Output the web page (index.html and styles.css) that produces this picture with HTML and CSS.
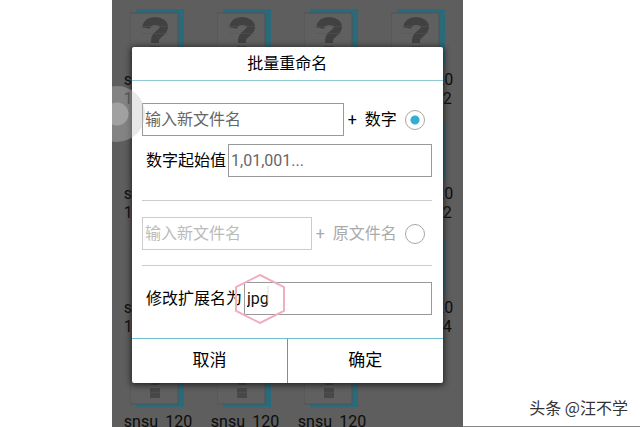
FILE: index.html
```html
<!DOCTYPE html>
<html lang="zh-CN">
<head>
<meta charset="utf-8">
<title>批量重命名</title>
<link rel="stylesheet" href="styles.css">
</head>
<body>
<svg class="defs" aria-hidden="true">
  <symbol id="file" viewBox="0 0 54 56">
    <path class="fold" d="M6 0h48v56H6z"/>
    <path class="paper" d="M0 4h48v49H0z"/>
    <path class="mark" d="M16 19c1-5 4-7 9-7 6 0 9 3 9 6 0 6-9 7-9 13v3"/>
    <path class="dot" d="M20 37h10v10H20z"/>
    <path class="crease" d="M20 41.500h10M11 17.500h27M11 24.500h27"/>
  </symbol>
</svg>
<main class="phone">
  <div class="files">
    <div class="file"><svg><use href="#file"/></svg><span>snsu_120</span><span>19</span></div>
    <div class="file"><svg><use href="#file"/></svg></div>
    <div class="file"><svg><use href="#file"/></svg></div>
    <div class="file"><svg><use href="#file"/></svg><span>snsu_120</span><span class="end">2</span></div>
    <div class="file"><svg><use href="#file"/></svg><span>snsu_120</span><span>19</span></div>
    <div class="file last"><svg><use href="#file"/></svg><span>snsu_120</span><span class="end">2</span></div>
    <div class="file"><svg><use href="#file"/></svg><span>snsu_120</span><span>19</span></div>
    <div class="file last"><svg><use href="#file"/></svg><span>snsu_120</span><span class="end">4</span></div>
    <div class="file"><svg><use href="#file"/></svg><span>snsu_120</span></div>
    <div class="file"><svg><use href="#file"/></svg><span>snsu_120</span></div>
    <div class="file"><svg><use href="#file"/></svg><span>snsu_120</span></div>
  </div>
  <form class="dialog" role="dialog" aria-labelledby="title">
    <h1 id="title">批量重命名</h1>
    <div class="fields">
      <div class="row">
        <input class="box" type="text" placeholder="输入新文件名" aria-label="输入新文件名">
        <label class="option" for="number"><span class="plus">+</span>数字</label>
        <input class="radio" type="radio" name="mode" id="number" checked>
      </div>
      <div class="row indent">
        <label for="start">数字起始值</label>
        <input class="box" type="text" id="start" placeholder="1,01,001...">
      </div>
      <div class="row ruled muted">
        <input class="box" type="text" placeholder="输入新文件名" aria-label="输入新文件名">
        <label class="option" for="original"><span class="plus">+</span>原文件名</label>
        <input class="radio" type="radio" name="mode" id="original">
      </div>
      <div class="row indent wide">
        <label for="ext">修改扩展名为</label>
        <div class="ext">
          <input class="box" type="text" id="ext" value="jpg">
          <svg class="hexagon" viewBox="0 0 50 50" aria-hidden="true"><path d="M25 1 49 13v24L25 49 1 37V13z"/><path class="caret" d="M33 12v17"/></svg>
        </div>
      </div>
    </div>
    <div class="actions">
      <button type="button">取消</button>
      <button type="button">确定</button>
    </div>
  </form>
  <div class="touch"></div>
</main>
<p class="credit">头条 @汪不学</p>
</body>
</html>
```

FILE: styles.css
```css
* { box-sizing: border-box; }

body {
  margin: 0;
  min-height: 100vh;
  background: #fff;
  color: #000;
  font: 16px/20px Roboto, "Noto Sans CJK SC", sans-serif;
}

.defs { position: absolute; width: 0; height: 0; }

.phone {
  position: relative;
  width: 54.8%;
  min-height: 100vh;
  margin-left: 17.5%;
  padding: 47px 20px 44px;
  overflow: hidden;
  background: #5e5e5e;
}

.files {
  position: absolute;
  inset: 9px 0 0;
  display: grid;
  grid-template-columns: repeat(4, 87px);
  grid-auto-rows: 114px;
  justify-content: center;
  color: #0c0c0c;
}

.file {
  display: flex;
  flex-direction: column;
  align-items: center;
  line-height: 19px;
}

.file svg { width: 54px; height: 56px; margin-bottom: 5px; }
.file span { width: 66px; }
.file .end { width: 68px; text-align: right; }
.file.last { grid-column: 4; }

.fold { fill: #2a6b7b; }
.paper { fill: #606060; stroke: #525252; }
.mark { fill: none; stroke: #414141; stroke-width: 8; }
.dot { fill: #484848; }
.crease { fill: none; stroke: #555; stroke-opacity: 0.5; }

.dialog {
  position: relative;
  border-radius: 2px;
  background: #fff;
  box-shadow: 0 1px 6px 1px #222;
}

h1 {
  margin: 0;
  padding: 6px 0;
  border-bottom: 1px solid #8fc9d6;
  font-size: 16px;
  font-weight: 400;
  line-height: 21px;
  text-align: center;
}

.fields { padding: 22px 11px 23px 10px; }

.row { display: flex; align-items: center; }
.row label { flex: none; }

.indent { gap: 2px; margin-top: 8px; padding-left: 4px; }
.indent.wide { margin-top: 16px; }

.box {
  flex: 1;
  min-width: 0;
  width: 100%;
  height: 33px;
  padding: 0 2px;
  border: 1px solid #999;
  border-radius: 0;
  outline: 0;
  background: #fff;
  color: #111;
  font: inherit;
}

.box::placeholder { color: #666; opacity: 1; }

.option { display: flex; gap: 8px; margin: 0 8px 0 4px; }

.radio {
  appearance: none;
  flex: none;
  width: 20px;
  height: 20px;
  margin: 0 7px 0 0;
  border: 1px solid #aaa69e;
  border-radius: 50%;
}

.radio:checked { background: radial-gradient(circle, #35acd4 4px, #fff 5px); }

.ruled {
  margin-top: 23px;
  padding: 16px 0 15px;
  border: solid #ccc;
  border-width: 1px 0;
}

.muted { color: #aaa; }
.muted .box { border-color: #ccc; }
.muted .box::placeholder { color: #bbb; }

.ext { position: relative; flex: 1; display: flex; }

.hexagon {
  position: absolute;
  left: -9px;
  top: -8px;
  width: 50px;
  height: 50px;
  fill: none;
  stroke: #f0aebe;
  stroke-width: 2;
  pointer-events: none;
}

.caret { stroke: #ddd; stroke-width: 1; }

.actions { display: flex; border-top: 1px solid #6fbfd3; }

.actions button {
  flex: 1;
  height: 44px;
  padding: 0 0 3px;
  border: 0;
  background: none;
  color: #000;
  font: inherit;
  font-size: 17px;
}

.actions button + button { border-left: 1px solid #38a9c8; }

.touch {
  position: absolute;
  left: -23px;
  top: 86px;
  width: 56px;
  height: 56px;
  border-radius: 50%;
  background: radial-gradient(circle, #b0b0b0d0 11px, #c0c0c060 12px);
}

.credit {
  position: absolute;
  left: 72.3%;
  right: 0;
  bottom: 0;
  margin: 0;
  padding: 0 12px 9px;
  border-bottom: 1px solid #888;
  color: #333;
  font-family: "Noto Sans CJK SC", sans-serif;
  text-align: right;
}
```
